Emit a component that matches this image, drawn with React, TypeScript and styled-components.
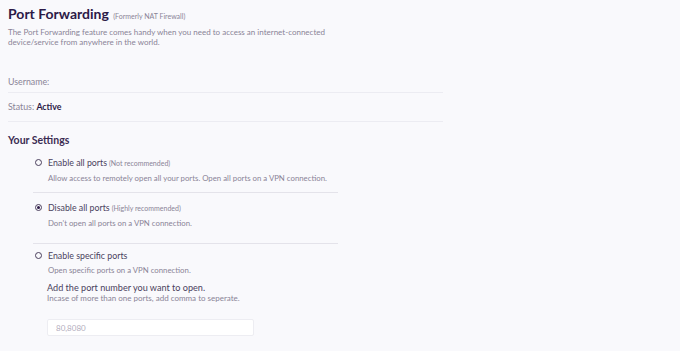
import React, { useState } from "react";
import styled, { createGlobalStyle } from "styled-components";

const GlobalStyle = createGlobalStyle`
  html, body {
    margin: 0;
    padding: 0;
    background: #f9f9fc;
    font-family: Lato, "Open Sans", sans-serif;
    color: #7b7489;
  }
`;

const Page = styled.div`
  width: 680px;
  height: 351px;
  overflow: hidden;
  padding: 5px 8px 0;
  box-sizing: border-box;
`;

const Header = styled.div`
  margin-bottom: 21px;
`;

const Title = styled.h1`
  margin: 0;
  font-size: 14px;
  font-weight: 700;
  color: #2c1a47;
  line-height: 18px;
  small {
    font-size: 7px;
    font-weight: 400;
    color: #8a8497;
    margin-left: 1px;
  }
`;

const Lead = styled.p`
  margin: 2px 0 0;
  font-size: 8px;
  line-height: 10px;
  width: 340px;
  color: #8a8497;
`;

const InfoRow = styled.div<{ $first?: boolean }>`
  width: 435px;
  padding: 8px 0 ${p => (p.$first ? 5 : 9)}px;
  font-size: 8.8px;
  line-height: 11px;
  border-bottom: 1px solid #ececf2;
  color: #8a8497;
  b {
    color: #2c1a47;
    font-weight: 700;
  }
`;

const SectionTitle = styled.h2`
  margin: 12px 0 0;
  font-size: 10.5px;
  font-weight: 700;
  color: #3b2c52;
  line-height: 12px;
`;

const Options = styled.div`
  margin: 11px 0 0 25px;
  width: 305px;
`;

const Option = styled.div<{ $pt: number; $pb: number; $last?: boolean }>`
  display: flex;
  gap: 6px;
  padding: ${p => p.$pt}px 0 ${p => p.$pb}px 2px;
  border-bottom: ${p => (p.$last ? "none" : "1px solid #e4e3ea")};
`;

const Radio = styled.span<{ $on?: boolean }>`
  flex: none;
  width: 5px;
  height: 5px;
  margin-top: 2px;
  border: 1px solid #4a3f5c;
  border-radius: 50%;
  display: flex;
  align-items: center;
  justify-content: center;
  &::after {
    content: "";
    width: 3px;
    height: 3px;
    border-radius: 50%;
    background: ${p => (p.$on ? "#2c1a47" : "transparent")};
  }
`;

const OptionBody = styled.div`
  flex: 1;
`;

const OptionLabel = styled.div`
  font-size: 8.8px;
  line-height: 11px;
  color: #4a3f5c;
  small {
    font-size: 7px;
    color: #8a8497;
    margin-left: 2px;
  }
`;

const OptionHint = styled.div`
  margin-top: 4px;
  font-size: 7.8px;
  line-height: 10px;
  color: #8a8497;
`;

const PortTitle = styled.div`
  margin-top: 7px;
  margin-left: -1px;
  font-size: 9.1px;
  line-height: 11px;
  color: #4a3f5c;
`;

const PortHint = styled.div`
  margin-left: -1px;
  font-size: 8px;
  line-height: 10px;
  color: #8a8497;
`;

const PortInput = styled.input`
  display: block;
  margin: 16px 0 0 -1px;
  width: 207px;
  height: 17px;
  box-sizing: border-box;
  border: 1px solid #ededf2;
  border-radius: 2px;
  background: #fff;
  padding: 0 8px;
  font-family: Lato, "Open Sans", sans-serif;
  font-size: 8px;
  color: #4a3f5c;
  outline: 0;
  &::placeholder {
    color: #b3aebd;
  }
`;

const options = [
  {
    id: "all",
    label: "Enable all ports",
    note: "(Not recommended)",
    hint: "Allow access to remotely open all your ports. Open all ports on a VPN connection.",
    pt: 0,
    pb: 9,
  },
  {
    id: "none",
    label: "Disable all ports",
    note: "(Highly recommended)",
    hint: "Don't open all ports on a VPN connection.",
    pt: 9,
    pb: 15,
  },
  {
    id: "specific",
    label: "Enable specific ports",
    note: "",
    hint: "Open specific ports on a VPN connection.",
    pt: 6,
    pb: 0,
  },
];

export default function App() {
  const [mode, setMode] = useState("none");
  const [ports, setPorts] = useState("");

  return (
    <Page>
      <GlobalStyle />
      <Header>
        <Title>
          Port Forwarding <small>(Formerly NAT Firewall)</small>
        </Title>
        <Lead>
          The Port Forwarding feature comes handy when you need to access an
          internet-connected device/service from anywhere in the world.
        </Lead>
      </Header>
      <InfoRow $first>Username:</InfoRow>
      <InfoRow>
        Status: <b>Active</b>
      </InfoRow>
      <SectionTitle>Your Settings</SectionTitle>
      <Options>
        {options.map((o, i) => (
          <Option
            key={o.id}
            $pt={o.pt}
            $pb={o.pb}
            $last={i === options.length - 1}
            onClick={() => setMode(o.id)}
          >
            <Radio $on={mode === o.id} />
            <OptionBody>
              <OptionLabel>
                {o.label}
                {o.note && <small>{o.note}</small>}
              </OptionLabel>
              <OptionHint>{o.hint}</OptionHint>
              {o.id === "specific" && (
                <>
                  <PortTitle>Add the port number you want to open.</PortTitle>
                  <PortHint>Incase of more than one ports, add comma to seperate.</PortHint>
                  <PortInput
                    placeholder="80,8080"
                    value={ports}
                    onChange={e => setPorts(e.target.value)}
                  />
                </>
              )}
            </OptionBody>
          </Option>
        ))}
      </Options>
    </Page>
  );
}
